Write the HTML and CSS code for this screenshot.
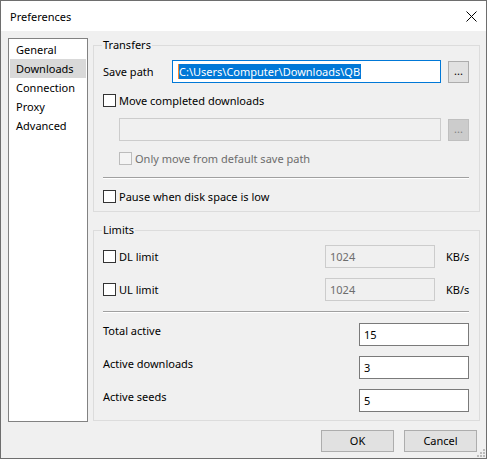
FILE: index.html
```html
<!DOCTYPE html>
<html lang="en">
<head>
    <meta charset="UTF-8">
    <title>Preferences</title>
    <link rel="stylesheet" href="styles.css">
</head>
<body>
    <div class="window">
        <div class="titlebar">
            <span class="title">Preferences</span>
            <svg class="close" width="11" height="11" viewBox="0 0 11 11">
                <path d="M0.5 0.5 L10.5 10.5 M10.5 0.5 L0.5 10.5" stroke="#000" stroke-width="1" fill="none"/>
            </svg>
        </div>

        <div class="content">
            <div class="main">
                <ul class="nav">
                    <li>General</li>
                    <li class="active">Downloads</li>
                    <li>Connection</li>
                    <li>Proxy</li>
                    <li>Advanced</li>
                </ul>

                <div class="pages">
                    <div class="group">
                        <div class="group-title">Transfers</div>
                        <div class="group-body transfers">
                            <div class="row">
                                <span class="label save-label">Save path</span>
                                <div class="field focus"><span class="selected">C:\Users\Computer\Downloads\QB</span></div>
                                <span class="browse">...</span>
                            </div>
                            <div class="row">
                                <span class="check"></span>
                                <span class="label">Move completed downloads</span>
                            </div>
                            <div class="row indent">
                                <div class="field disabled"></div>
                                <span class="browse disabled">...</span>
                            </div>
                            <div class="row indent">
                                <span class="check disabled"></span>
                                <span class="label muted">Only move from default save path</span>
                            </div>
                            <div class="sep"></div>
                            <div class="row">
                                <span class="check"></span>
                                <span class="label">Pause when disk space is low</span>
                            </div>
                        </div>
                    </div>

                    <div class="group">
                        <div class="group-title">Limits</div>
                        <div class="group-body limits">
                            <div class="row">
                                <span class="check"></span>
                                <span class="label grow">DL limit</span>
                                <div class="field disabled small">1024</div>
                                <span class="unit">KB/s</span>
                            </div>
                            <div class="row">
                                <span class="check"></span>
                                <span class="label grow">UL limit</span>
                                <div class="field disabled small">1024</div>
                                <span class="unit">KB/s</span>
                            </div>
                            <div class="sep"></div>
                            <div class="row top">
                                <span class="label grow">Total active</span>
                                <div class="field number">15</div>
                            </div>
                            <div class="row top">
                                <span class="label grow">Active downloads</span>
                                <div class="field number">3</div>
                            </div>
                            <div class="row top">
                                <span class="label grow">Active seeds</span>
                                <div class="field number">5</div>
                            </div>
                        </div>
                    </div>
                </div>
            </div>

            <div class="buttons">
                <span class="btn">OK</span>
                <span class="btn">Cancel</span>
            </div>
        </div>

        <svg class="grip" width="9" height="9" viewBox="0 0 9 9">
            <rect x="7" y="1" width="2" height="2" fill="#bcbcbc"/>
            <rect x="4" y="4" width="2" height="2" fill="#bcbcbc"/>
            <rect x="7" y="4" width="2" height="2" fill="#bcbcbc"/>
            <rect x="1" y="7" width="2" height="2" fill="#bcbcbc"/>
            <rect x="4" y="7" width="2" height="2" fill="#bcbcbc"/>
            <rect x="7" y="7" width="2" height="2" fill="#bcbcbc"/>
        </svg>
    </div>
</body>
</html>
```

FILE: styles.css
```css
*{
    margin: 0;
    padding: 0;
    box-sizing: border-box;
}

body{
    font-family: "Noto Sans", sans-serif;
    font-size: 11px;
    color: #000;
    background-color: #f0f0f0;
}

.window{
    position: relative;
    width: 487px;
    height: 459px;
    border: 1px solid #6e6e6e;
    background-color: #f0f0f0;
    display: flex;
    flex-direction: column;
}

.titlebar{
    height: 30px;
    background-color: #fff;
    display: flex;
    align-items: center;
    justify-content: space-between;
    padding: 0 9px;
}

.content{
    flex: 1;
    display: flex;
    flex-direction: column;
    padding: 7px 6px 6px 7px;
}

.main{
    display: flex;
    gap: 5px;
    height: 384px;
}

.nav{
    width: 80px;
    list-style: none;
    background-color: #fff;
    border: 1px solid #828282;
    padding: 1px;
}

.nav li{
    height: 19px;
    line-height: 19px;
    padding-left: 6px;
}

.nav li.active{
    background-color: #d9d9d9;
}

.pages{
    width: 387px;
    display: flex;
    flex-direction: column;
    gap: 18px;
    padding-top: 7px;
}

.group{
    border: 1px solid #dcdcdc;
}

.group-title{
    width: fit-content;
    height: 16px;
    line-height: 16px;
    margin: -9px 0 0 8px;
    padding: 0 1px;
    background-color: #f0f0f0;
}

.group-body{
    display: flex;
    flex-direction: column;
    padding: 7px 10px 3px 9px;
}

.transfers{
    gap: 6px;
}

.limits{
    gap: 10px;
    padding-bottom: 8px;
}

.row{
    display: flex;
    align-items: center;
    height: 23px;
}

.row.top{
    align-items: flex-start;
}

.row.top .label{
    line-height: 16px;
}

.row.indent{
    padding-left: 16px;
}

.label{
    white-space: nowrap;
}

.label.grow{
    flex: 1;
}

.label.muted{
    color: #6d6d6d;
}

.save-label{
    width: 69px;
}

.check{
    width: 13px;
    height: 13px;
    margin-right: 3px;
    border: 1px solid #333;
    background-color: #fff;
}

.check.disabled{
    border-color: #bcbcbc;
    background-color: #f4f4f4;
}

.sep{
    height: 2px;
    margin-top: 1px;
    border-top: 1px solid #a0a0a0;
    border-bottom: 1px solid #fff;
}

.limits .sep{
    margin-top: 0;
}

.field{
    height: 23px;
    line-height: 21px;
    padding-left: 4px;
    border: 1px solid #7a7a7a;
    background-color: #fff;
    white-space: nowrap;
    overflow: hidden;
}

.field.focus{
    width: 269px;
    border-color: #0078d7;
    padding-left: 5px;
}

.field.focus .selected{
    display: inline-block;
    line-height: 15px;
    padding-right: 1px;
    background-color: #0078d7;
    color: #fff;
    border-left: 1px solid #ff8728;
}

.field.disabled{
    flex: 1;
    border-color: #cccccc;
    background-color: #f0f0f0;
    color: #6d6d6d;
}

.field.small{
    flex: none;
    width: 110px;
}

.field.number{
    width: 110px;
}

.unit{
    width: 23px;
    margin-left: 11px;
}

.browse{
    width: 21px;
    height: 22px;
    margin-left: 7px;
    align-self: flex-end;
    line-height: 18px;
    text-align: center;
    background-color: #e1e1e1;
    border: 1px solid #adadad;
}

.browse.disabled{
    background-color: #cccccc;
    border-color: #bfbfbf;
    color: #838383;
}

.buttons{
    display: flex;
    justify-content: flex-end;
    gap: 10px;
    margin-top: 8px;
    padding-right: 3px;
}

.btn{
    width: 73px;
    height: 22px;
    line-height: 20px;
    text-align: center;
    background-color: #e1e1e1;
    border: 1px solid #adadad;
}

.grip{
    position: absolute;
    right: 1px;
    bottom: 1px;
}
```
